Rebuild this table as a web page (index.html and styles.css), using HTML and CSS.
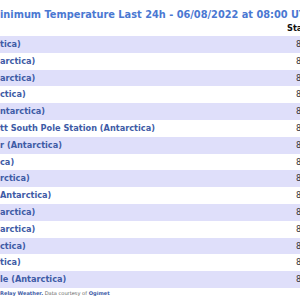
FILE: index.html
```html
<!DOCTYPE html>
<html>
<head>
<meta charset="utf-8">
<link rel="stylesheet" href="styles.css">
</head>
<body>
<div class="page">
  <h1 class="title">inimum Temperature Last 24h - 06/08/2022 at 08:00 UTC</h1>
  <table class="obs">
    <colgroup><col class="c-name"><col class="c-stn"></colgroup>
    <thead>
      <tr><th></th><th class="stn-h">Station</th></tr>
    </thead>
    <tbody>
      <tr><td class="name">tica)</td><td class="num">89000</td></tr>
      <tr><td class="name">arctica)</td><td class="num">89000</td></tr>
      <tr><td class="name">arctica)</td><td class="num">89000</td></tr>
      <tr><td class="name">ctica)</td><td class="num">89000</td></tr>
      <tr><td class="name">ntarctica)</td><td class="num">89000</td></tr>
      <tr><td class="name">tt South Pole Station (Antarctica)</td><td class="num">89000</td></tr>
      <tr><td class="name">r (Antarctica)</td><td class="num">89000</td></tr>
      <tr><td class="name">ca)</td><td class="num">89000</td></tr>
      <tr><td class="name">rctica)</td><td class="num">89000</td></tr>
      <tr><td class="name">Antarctica)</td><td class="num">89000</td></tr>
      <tr><td class="name">arctica)</td><td class="num">89000</td></tr>
      <tr><td class="name">arctica)</td><td class="num">89000</td></tr>
      <tr><td class="name">ctica)</td><td class="num">89000</td></tr>
      <tr><td class="name">tica)</td><td class="num">89000</td></tr>
      <tr><td class="name">le (Antarctica)</td><td class="num">89000</td></tr>
    </tbody>
  </table>
  <p class="footer"><b>Relay Weather.</b> Data courtesy of <b>Ogimet</b></p>
</div>
</body>
</html>
```

FILE: styles.css
```css
body {
  margin: 0;
  background: #ffffff;
  font-family: "DejaVu Sans", Verdana, sans-serif;
}
.page {
  width: 300px;
  height: 300px;
  overflow: hidden;
}
.title {
  margin: 0;
  padding-top: 9px;
  height: 11px;
  line-height: 11px;
  font-size: 9.8px;
  font-weight: bold;
  color: #4a78d2;
  white-space: nowrap;
}
.obs {
  border-collapse: collapse;
  border-spacing: 0;
  table-layout: fixed;
  width: 360px;
  font-size: 8.2px;
}
.c-name { width: 287px; }
.c-stn { width: 73px; }
.obs th {
  height: 16px;
  padding: 0;
  line-height: 16px;
  text-align: left;
  font-weight: bold;
  color: #111;
  white-space: nowrap;
}
.obs td {
  height: 16.8px;
  padding: 0;
  line-height: 16.8px;
  white-space: nowrap;
  overflow: visible;
}
.obs tbody tr:nth-child(odd) { background: #dfdffa; }
.name {
  font-weight: bold;
  color: #3e5ba6;
}
.num {
  padding-left: 9px !important;
  color: #333;
}
.footer {
  margin: 0;
  padding-top: 2px;
  line-height: 7px;
  font-size: 5.1px;
  color: #666;
  white-space: nowrap;
}
.footer b {
  color: #3e5ba6;
}
```
